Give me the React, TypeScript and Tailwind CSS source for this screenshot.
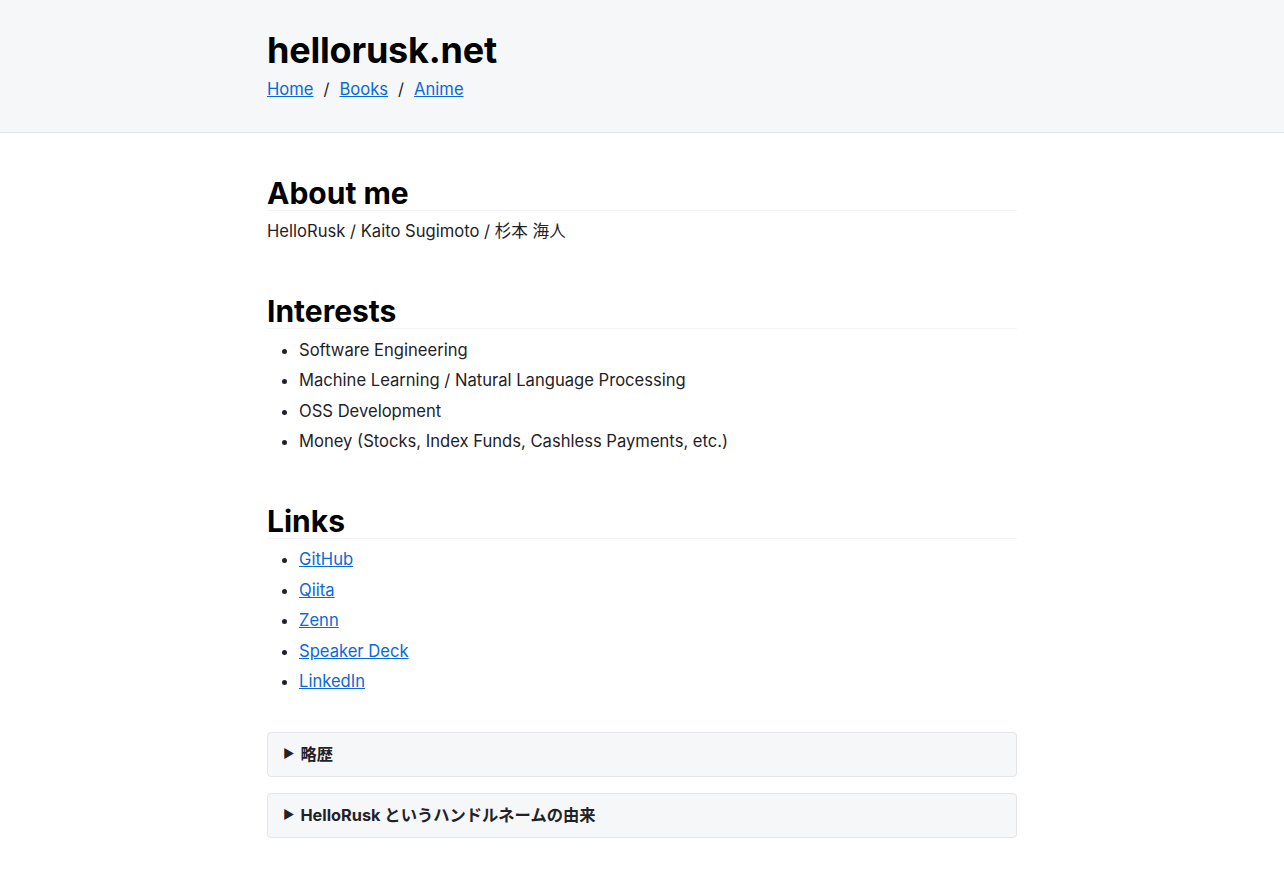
import React from "react";

const font = { fontFamily: 'Inter, "Noto Sans CJK JP", sans-serif' };

export default function App() {
  return (
    <div className="min-h-screen bg-white text-[#1f2328]" style={font}>
      <header className="h-[133px] border-b border-[#e1e4e8] bg-[#f6f7f8]">
        <div className="mx-auto w-[750px] pt-[28px]">
          <h1 className="text-[36px] font-bold leading-[44px] text-black tracking-[-0.2px]">hellorusk.net</h1>
          <nav className="mt-[5px] flex items-center text-[16.6px] leading-[24px]">
            <a href="#" className="text-[#0969da] underline">Home</a>
            <span className="mx-[10px] text-[#1f2328]">/</span>
            <a href="#" className="text-[#0969da] underline">Books</a>
            <span className="mx-[10px] text-[#1f2328]">/</span>
            <a href="#" className="text-[#0969da] underline">Anime</a>
          </nav>
        </div>
      </header>
      <main className="mx-auto w-[750px] pt-[43px] text-[16.6px]">
        <h2 className="border-b border-[#f3f4f5] text-[30px] font-bold leading-[34px] text-black">About me</h2>
        <p className="mt-[5px] leading-[30px]">HelloRusk / Kaito Sugimoto / 杉本 海人</p>

        <h2 className="mt-[48px] border-b border-[#f3f4f5] text-[30px] font-bold leading-[34px] text-black">Interests</h2>
        <ul className="mt-[6px] list-disc pl-[32px] leading-[30.3px]">
          <li>Software Engineering</li>
          <li>Machine Learning / Natural Language Processing</li>
          <li>OSS Development</li>
          <li>Money (Stocks, Index Funds, Cashless Payments, etc.)</li>
        </ul>

        <h2 className="mt-[48px] border-b border-[#f3f4f5] text-[30px] font-bold leading-[34px] text-black">Links</h2>
        <ul className="mt-[5px] list-disc pl-[32px] leading-[30.5px]">
          <li><a href="#" className="text-[#0969da] underline">GitHub</a></li>
          <li><a href="#" className="text-[#0969da] underline">Qiita</a></li>
          <li><a href="#" className="text-[#0969da] underline">Zenn</a></li>
          <li><a href="#" className="text-[#0969da] underline">Speaker Deck</a></li>
          <li><a href="#" className="text-[#0969da] underline">LinkedIn</a></li>
        </ul>

        <div className="mt-[35px] flex h-[45px] items-center rounded-[4px] border border-[#e3e5e8] bg-[#f6f7f8] px-[15px] text-[16.3px] font-bold">
          <span className="mr-[6px] text-[12px]">▶</span>略歴
        </div>
        <div className="mt-[16px] flex h-[45px] items-center rounded-[4px] border border-[#e3e5e8] bg-[#f6f7f8] px-[15px] text-[16.3px] font-bold">
          <span className="mr-[6px] text-[12px]">▶</span>HelloRusk というハンドルネームの由来
        </div>
      </main>
    </div>
  );
}
